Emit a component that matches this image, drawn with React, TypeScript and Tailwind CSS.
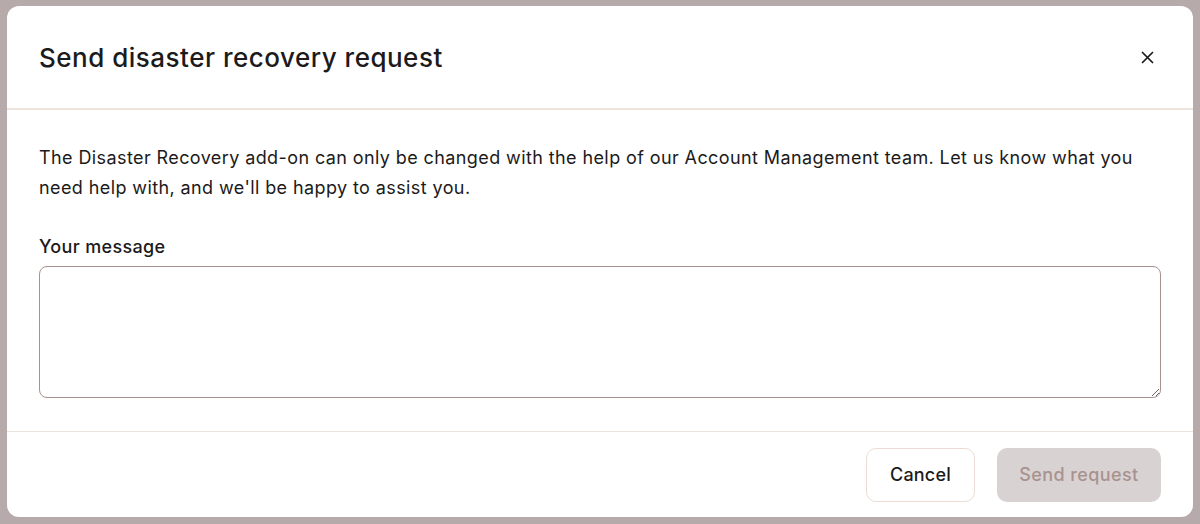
import React from 'react'

const App: React.FC = () => {
  return (
    <div
      className="h-[524px] w-[1200px] bg-[#b6aaaa] pt-[6px] px-[7px]"
      style={{ fontFamily: 'Inter, "Noto Sans", sans-serif' }}
    >
      <div className="flex h-[511px] flex-col rounded-[12px] bg-white text-[#1c1a1a]">
        <div className="flex h-[104px] items-center justify-between border-b-2 border-[#ede4de] pl-[32px] pr-[36px]">
          <h2 className="text-[26px] font-medium tracking-[0.5px]">Send disaster recovery request</h2>
          <button aria-label="Close" className="flex h-5 w-5 items-center justify-center">
            <svg width="13" height="13" viewBox="0 0 13 13" fill="none" stroke="#1c1a1a" strokeWidth="1.7" strokeLinecap="round">
              <path d="M1.5 1.5l10 10M11.5 1.5l-10 10" />
            </svg>
          </button>
        </div>

        <div className="flex h-[322px] flex-col border-b border-[#ede4de] px-[32px] pt-[33px]">
          <p className="text-[18px] leading-[30px] tracking-[0.4px]">
            The Disaster Recovery add-on can only be changed with the help of our Account Management team. Let us know what you need help with, and we'll be happy to assist you.
          </p>
          <label className="mt-[34px] text-[18px] font-medium leading-[20px] tracking-[0.35px]">Your message</label>
          <textarea className="mt-[9px] h-[132px] w-full resize-y rounded-[8px] border border-[#a8908e] px-3 py-2 outline-none" />
        </div>

        <div className="flex flex-1 items-center justify-end gap-[22px] px-[32px]">
          <button className="h-[54px] w-[109px] rounded-[10px] border border-[#ecdcd4] bg-white text-[18px] font-medium tracking-[0.2px] text-[#1c1a1a]">
            Cancel
          </button>
          <button disabled className="h-[54px] w-[164px] rounded-[10px] bg-[#d9d2d2] text-[18px] font-medium tracking-[0.4px] text-[#a89290]">
            Send request
          </button>
        </div>
      </div>
    </div>
  )
}

export default App
